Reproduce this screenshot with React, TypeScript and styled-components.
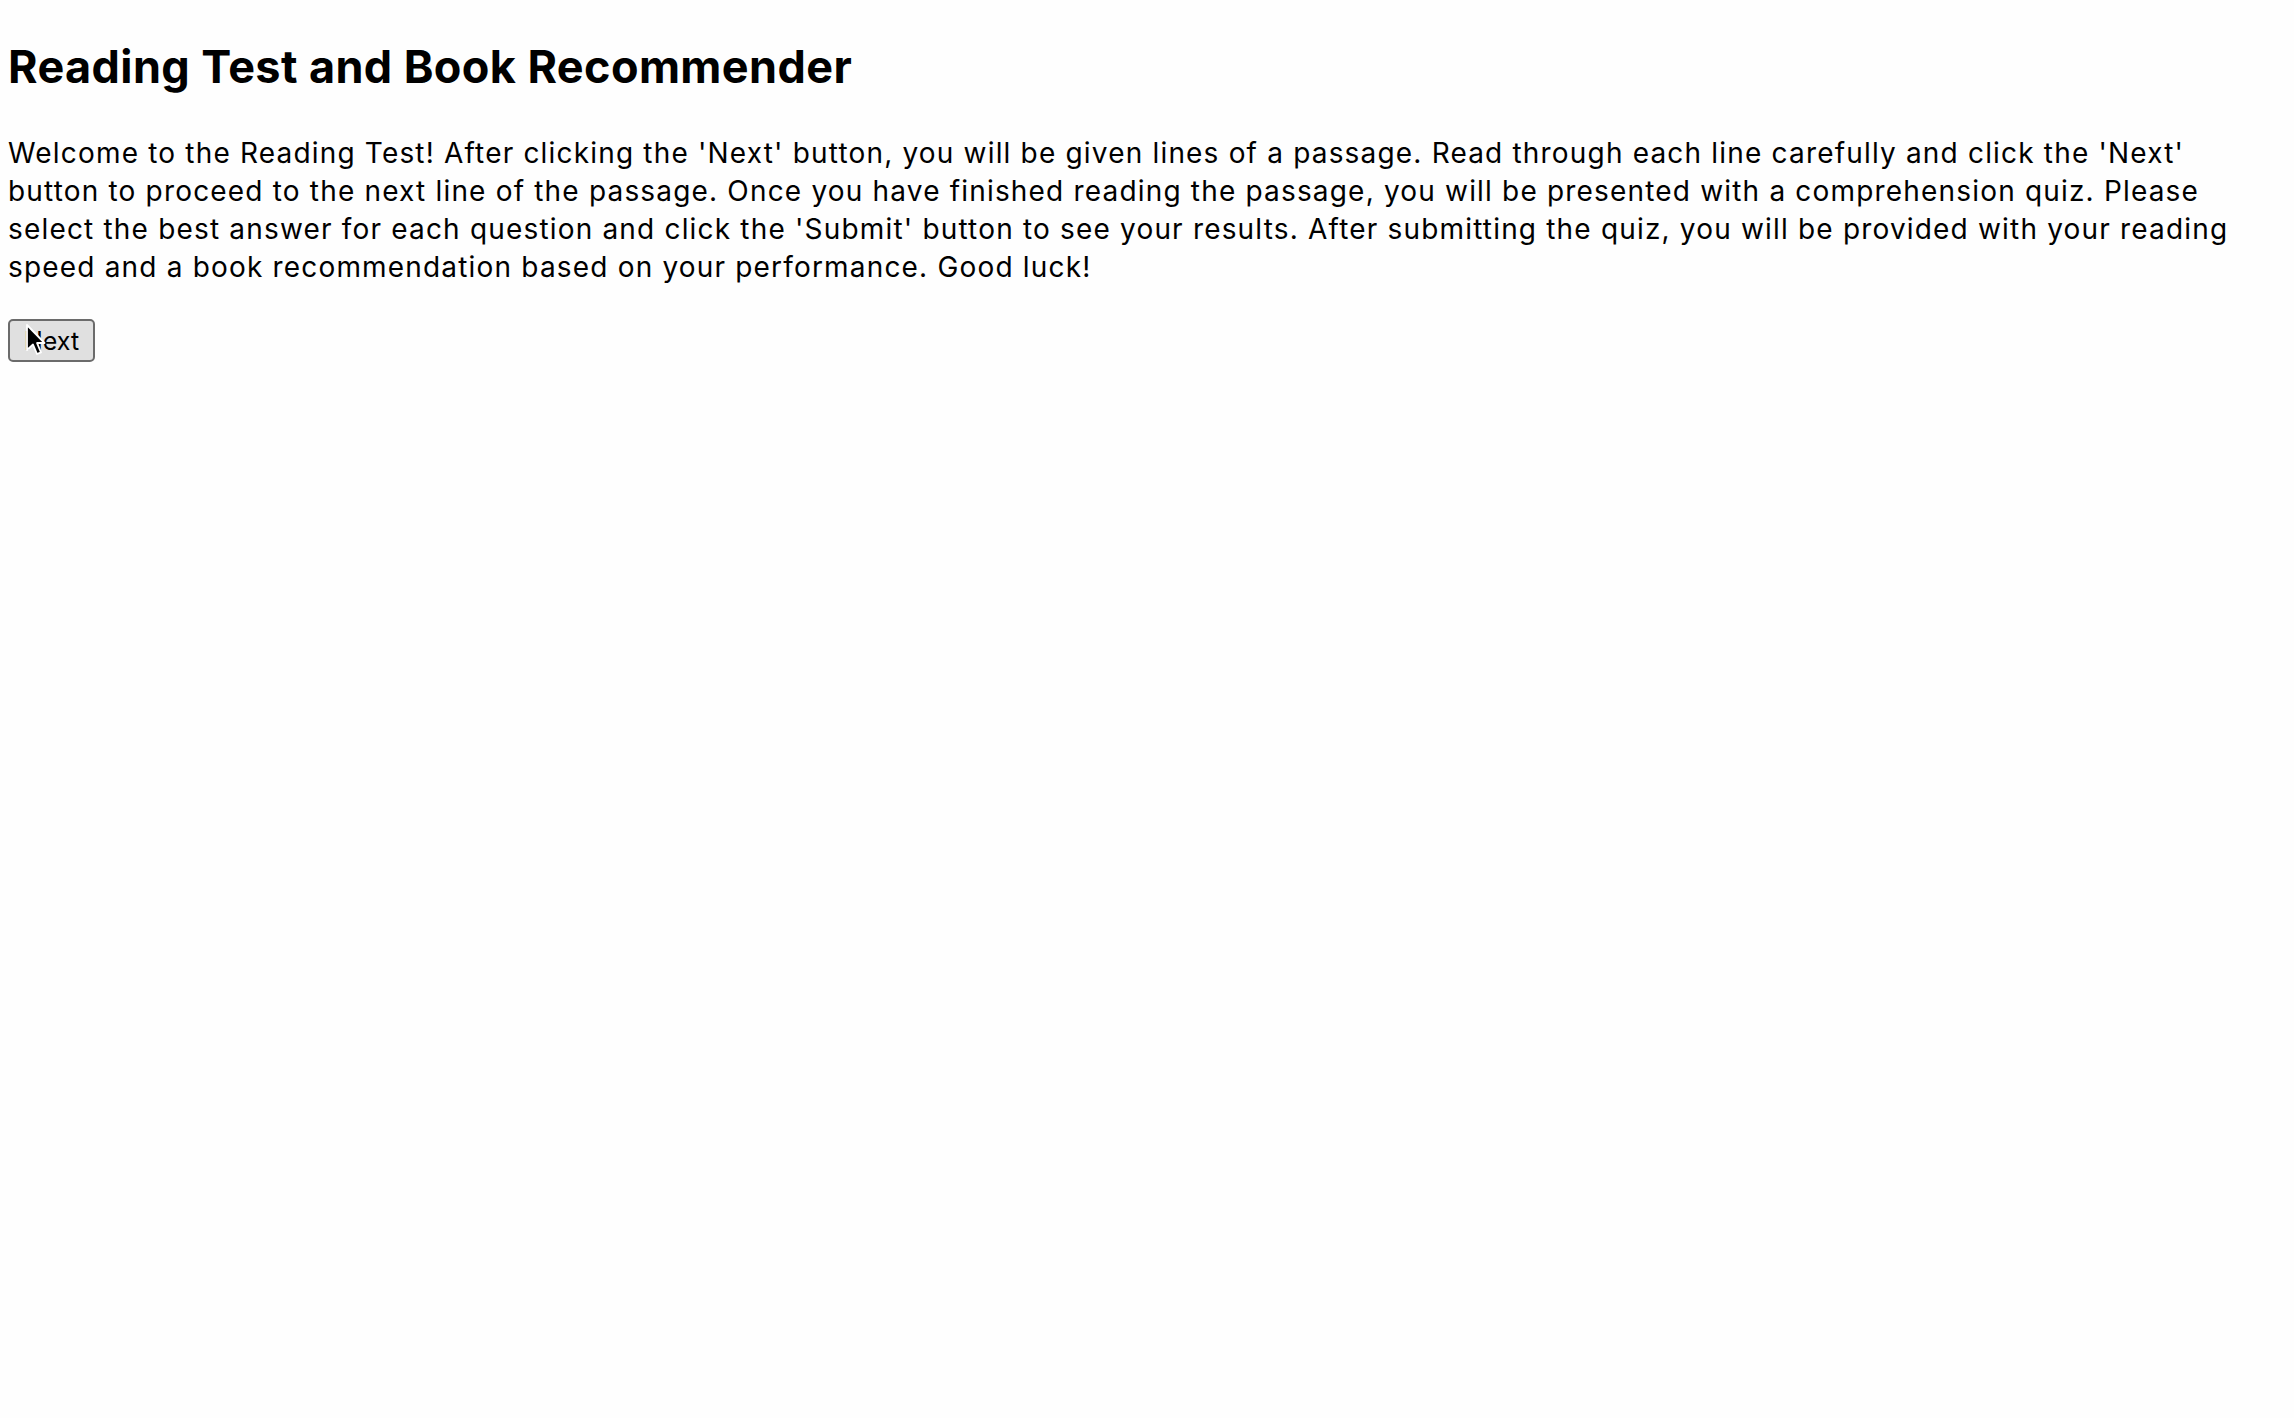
import React from 'react';
import styled, { createGlobalStyle } from 'styled-components';

const GlobalStyle = createGlobalStyle`
  html, body {
    margin: 0;
    padding: 0;
    background: #fefefe;
  }
  body {
    font-family: Inter, "Liberation Sans", Arial, sans-serif;
    color: #000;
  }
`;

const Page = styled.div`
  padding: 8px;
  display: flex;
  flex-direction: column;
  align-items: flex-start;
`;

const Title = styled.h1`
  margin: 32px 0 0 0;
  font-size: 45px;
  line-height: 54px;
  font-weight: 700;
  letter-spacing: 0.4px;
`;

const Intro = styled.p`
  margin: 40px 0 0 0;
  max-width: 2250px;
  font-size: 28px;
  line-height: 38px;
  letter-spacing: 1.18px;
`;

const ButtonWrap = styled.div`
  position: relative;
  margin-top: 33px;
`;

const NextButton = styled.button`
  font-family: Inter, "Liberation Sans", Arial, sans-serif;
  font-size: 25px;
  height: 43px;
  padding: 0 14px;
  background: #e0e0e0;
  border: 2px solid #6b6b6b;
  border-radius: 5px;
  color: #000;
  cursor: pointer;
`;

const Cursor = styled.svg`
  position: absolute;
  left: 17px;
  top: 4px;
  pointer-events: none;
`;

export default function App() {
  return (
    <>
      <GlobalStyle />
      <Page>
        <Title>Reading Test and Book Recommender</Title>
        <Intro>
          Welcome to the Reading Test! After clicking the 'Next' button, you will be given lines of a passage. Read
          through each line carefully and click the 'Next' button to proceed to the next line of the passage. Once you
          have finished reading the passage, you will be presented with a comprehension quiz. Please select the best
          answer for each question and click the 'Submit' button to see your results. After submitting the quiz, you
          will be provided with your reading speed and a book recommendation based on your performance. Good luck!
        </Intro>
        <ButtonWrap>
          <NextButton>Next</NextButton>
          <Cursor width="22" height="34" viewBox="0 0 22 34">
            <path d="M2 2 L2 27 L8 21.5 L12 31 L16 29.3 L12 20 L19.5 20 Z" fill="#000" stroke="#fff" strokeWidth="1.8" strokeLinejoin="round" />
          </Cursor>
        </ButtonWrap>
      </Page>
    </>
  );
}
